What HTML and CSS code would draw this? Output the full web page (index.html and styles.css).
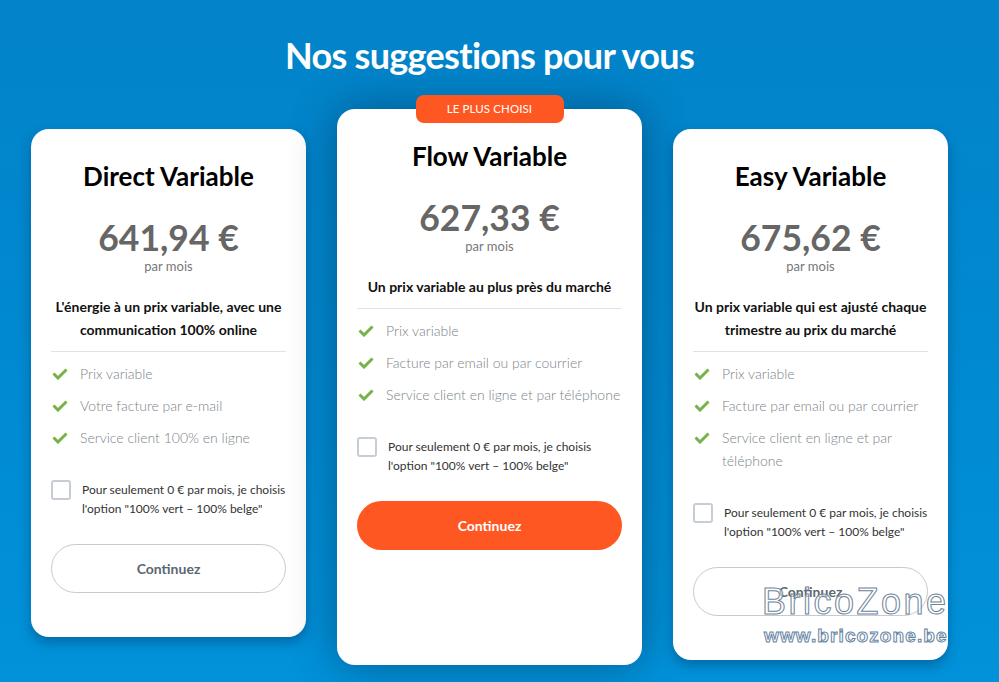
FILE: index.html
```html
<!DOCTYPE html>
<html lang="fr">
  <head>
    <meta charset="UTF-8" />
    <title>Nos suggestions pour vous</title>
    <link rel="stylesheet" href="styles.css">
  </head>
  <body>
    <div class="page">
      <h1 class="page-title">Nos suggestions pour vous</h1>

      <div class="offers">
        <div class="offer">
          <h2 class="offer-name">Direct Variable</h2>
          <div class="offer-price">641,94 €</div>
          <div class="offer-period">par mois</div>
          <p class="offer-desc">L'énergie à un prix variable, avec une communication 100% online</p>
          <ul class="offer-features">
            <li><svg class="check" viewBox="0 0 16 12"><polyline points="1.5,5.5 6,10 14.5,1.5" /></svg>Prix variable</li>
            <li><svg class="check" viewBox="0 0 16 12"><polyline points="1.5,5.5 6,10 14.5,1.5" /></svg>Votre facture par e-mail</li>
            <li><svg class="check" viewBox="0 0 16 12"><polyline points="1.5,5.5 6,10 14.5,1.5" /></svg>Service client 100% en ligne</li>
          </ul>
          <label class="offer-option">
            <span class="box"></span>
            <span>Pour seulement 0 € par mois, je choisis l'option "100% vert – 100% belge"</span>
          </label>
          <button class="btn btn-outline">Continuez</button>
        </div>

        <div class="offer offer-featured">
          <span class="badge">LE PLUS CHOISI</span>
          <h2 class="offer-name">Flow Variable</h2>
          <div class="offer-price">627,33 €</div>
          <div class="offer-period">par mois</div>
          <p class="offer-desc">Un prix variable au plus près du marché</p>
          <ul class="offer-features">
            <li><svg class="check" viewBox="0 0 16 12"><polyline points="1.5,5.5 6,10 14.5,1.5" /></svg>Prix variable</li>
            <li><svg class="check" viewBox="0 0 16 12"><polyline points="1.5,5.5 6,10 14.5,1.5" /></svg>Facture par email ou par courrier</li>
            <li><svg class="check" viewBox="0 0 16 12"><polyline points="1.5,5.5 6,10 14.5,1.5" /></svg>Service client en ligne et par téléphone</li>
          </ul>
          <label class="offer-option">
            <span class="box"></span>
            <span>Pour seulement 0 € par mois, je choisis l'option "100% vert – 100% belge"</span>
          </label>
          <button class="btn btn-primary">Continuez</button>
        </div>

        <div class="offer">
          <h2 class="offer-name">Easy Variable</h2>
          <div class="offer-price">675,62 €</div>
          <div class="offer-period">par mois</div>
          <p class="offer-desc">Un prix variable qui est ajusté chaque trimestre au prix du marché</p>
          <ul class="offer-features">
            <li><svg class="check" viewBox="0 0 16 12"><polyline points="1.5,5.5 6,10 14.5,1.5" /></svg>Prix variable</li>
            <li><svg class="check" viewBox="0 0 16 12"><polyline points="1.5,5.5 6,10 14.5,1.5" /></svg>Facture par email ou par courrier</li>
            <li><svg class="check" viewBox="0 0 16 12"><polyline points="1.5,5.5 6,10 14.5,1.5" /></svg>Service client en ligne et par téléphone</li>
          </ul>
          <label class="offer-option">
            <span class="box"></span>
            <span>Pour seulement 0 € par mois, je choisis l'option "100% vert – 100% belge"</span>
          </label>
          <button class="btn btn-outline">Continuez</button>
        </div>
      </div>

      <div class="watermark">
        <span class="wm-name">BricoZone</span>
        <span class="wm-url">www.bricozone.be</span>
      </div>
    </div>
  </body>
</html>
```

FILE: styles.css
```css
html,
body {
  margin: 0;
  padding: 0;
  height: 100%;
  overflow: hidden;
}

body {
  font-family: Lato, "Open Sans", sans-serif;
  background: linear-gradient(180deg, #0383c9 0%, #0089d0 50%, #0192da 100%);
  color: #333;
}

.page {
  position: relative;
  width: 979px;
  height: 682px;
}

.page-title {
  margin: 0;
  padding-top: 33px;
  text-align: center;
  font-size: 36px;
  line-height: 44px;
  font-weight: 700;
  letter-spacing: -0.7px;
  color: #fff;
}

.offers {
  display: flex;
  justify-content: center;
  align-items: flex-start;
  gap: 31px;
  margin-top: 32px;
}

.offer {
  position: relative;
  width: 275px;
  box-sizing: border-box;
  margin-top: 20px;
  padding: 33px 20px 44px;
  background: #fff;
  border-radius: 18px;
  box-shadow: 0 6px 12px rgba(0, 40, 80, 0.35);
  text-align: center;
}

.offer-featured {
  width: 305px;
  margin-top: 0;
  padding-bottom: 115px;
  box-shadow: 0 0 45px rgba(0, 30, 60, 0.45);
}

.badge {
  position: absolute;
  top: -14px;
  left: 50%;
  transform: translateX(-50%);
  width: 148px;
  height: 28px;
  line-height: 28px;
  border-radius: 8px;
  background: #ff5722;
  color: #fff;
  font-size: 11.5px;
  letter-spacing: 0.1px;
}

.offer-name {
  margin: 0;
  font-size: 26px;
  line-height: 28px;
  font-weight: 700;
  color: #000;
}

.offer-price {
  margin-top: 28px;
  font-size: 35.5px;
  line-height: 40px;
  font-weight: 700;
  color: #666;
}

.offer-period {
  font-size: 13px;
  line-height: 16px;
  color: #777;
}

.offer-desc {
  margin: 21px 0 0;
  padding-bottom: 10px;
  border-bottom: 1px solid #e2e2e2;
  font-size: 14px;
  line-height: 23px;
  font-weight: 700;
  color: #111;
}

.offer-features {
  list-style: none;
  margin: 10px 0 0;
  padding: 0;
  text-align: left;
}

.offer-features li {
  display: flex;
  align-items: flex-start;
  gap: 12px;
  margin-bottom: 9px;
  padding-left: 1px;
  font-size: 14px;
  line-height: 23px;
  font-weight: 300;
  color: #7b838a;
}

.check {
  flex: none;
  width: 16px;
  height: 12px;
  margin-top: 6px;
}

.check polyline {
  fill: none;
  stroke: #76b247;
  stroke-width: 3;
}

.offer-option {
  display: flex;
  align-items: flex-start;
  gap: 11px;
  margin-top: 31px;
  text-align: left;
  font-size: 12px;
  line-height: 19px;
  color: #333;
}

.box {
  flex: none;
  width: 20px;
  height: 20px;
  box-sizing: border-box;
  border: 2px solid #c6cdd4;
  border-radius: 3px;
}

.btn {
  display: block;
  width: 100%;
  height: 49px;
  margin-top: 26px;
  border-radius: 25px;
  font-family: Lato, sans-serif;
  font-size: 14px;
  font-weight: 700;
  cursor: pointer;
}

.btn-outline {
  background: #fff;
  border: 1px solid #c3cbd2;
  color: #5a6770;
}

.btn-primary {
  background: #ff5722;
  border: none;
  color: #fff;
}

/* site stamp in the corner */
.watermark {
  position: absolute;
  left: 762px;
  top: 582px;
  display: flex;
  flex-direction: column;
  font-family: "Liberation Sans", Arial, sans-serif;
  pointer-events: none;
}

.wm-name {
  font-size: 36px;
  line-height: 40px;
  letter-spacing: 2.5px;
  color: rgba(255, 255, 255, 0.55);
  -webkit-text-stroke: 1px #6e8397;
}

.wm-url {
  margin-top: 4px;
  margin-left: 2px;
  font-size: 19px;
  line-height: 20px;
  font-weight: 700;
  letter-spacing: 1.1px;
  color: rgba(255, 255, 255, 0.8);
  -webkit-text-stroke: 1px #6584a3;
}
```
